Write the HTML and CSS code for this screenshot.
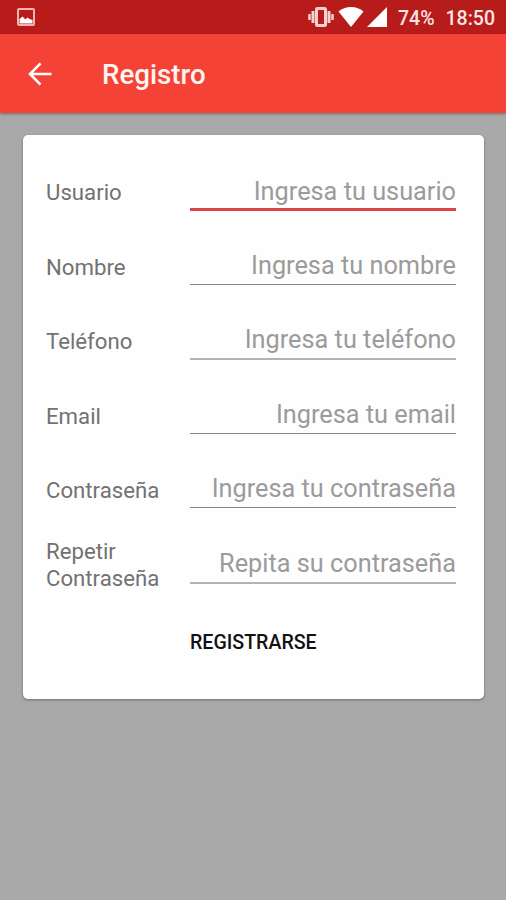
FILE: index.html
```html
<!DOCTYPE html>
<html lang="es">
<head>
    <meta charset="UTF-8">
    <meta name="viewport" content="width=device-width, initial-scale=1.0">
    <title>Registro</title>
    <link rel="stylesheet" href="styles.css">
</head>
<body>
    <div class="status-bar">
        <svg class="icon-picture" width="18" height="18" viewBox="0 0 18 18">
            <rect x="1" y="1" width="16" height="16" rx="1" fill="none" stroke="#f0b5b2" stroke-width="2"/>
            <path d="M2.500 15.500v-4.500l3-2.500 3 3 2-2 2 1.500 3 1v3.500z" fill="#fff"/>
        </svg>
        <div class="status-right">
            <svg class="icon-vibrate" width="26" height="20" viewBox="0 0 26 20" fill="none" stroke="#f8d2ce">
                <rect x="8.500" y="1.500" width="9" height="17" rx="1" stroke-width="3"/>
                <path d="M5 4v12M21 4v12" stroke-width="3"/>
                <path d="M1.500 7v6M24.500 7v6" stroke-width="2.500"/>
            </svg>
            <svg class="icon-wifi" width="26" height="20" viewBox="0 0 26 20">
                <path d="M13 20L0.500 4.500C4 1.500 8 0 13 0s9 1.500 12.500 4.500z" fill="#fff"/>
            </svg>
            <svg class="icon-signal" width="20" height="20" viewBox="0 0 20 20">
                <path d="M0 20L20 0v20z" fill="#fff"/>
            </svg>
            <span class="battery">74%</span>
            <span class="time">18:50</span>
        </div>
    </div>

    <header class="toolbar">
        <a class="back" href="#" aria-label="Volver">
            <svg width="24" height="24" viewBox="0 0 24 24" fill="none" stroke="#fff" stroke-width="2.600">
                <path d="M12.500 1.300L2 12l10.500 10.700M2 12h21.500"/>
            </svg>
        </a>
        <h1>Registro</h1>
    </header>

    <form class="card">
        <div class="form-group">
            <label for="usuario">Usuario</label>
            <input class="active" type="text" id="usuario" placeholder="Ingresa tu usuario">
        </div>
        <div class="form-group">
            <label for="nombre">Nombre</label>
            <input type="text" id="nombre" placeholder="Ingresa tu nombre">
        </div>
        <div class="form-group">
            <label for="telefono">Teléfono</label>
            <input class="light" type="text" id="telefono" placeholder="Ingresa tu teléfono">
        </div>
        <div class="form-group">
            <label for="email">Email</label>
            <input type="text" id="email" placeholder="Ingresa tu email">
        </div>
        <div class="form-group">
            <label for="contrasena">Contraseña</label>
            <input type="password" id="contrasena" placeholder="Ingresa tu contraseña">
        </div>
        <div class="form-group">
            <label for="repetir">Repetir Contraseña</label>
            <input class="light" type="password" id="repetir" placeholder="Repita su contraseña">
        </div>
        <button type="button">REGISTRARSE</button>
    </form>
</body>
</html>
```
FILE: styles.css
```css
* {
    box-sizing: border-box;
}
body {
    margin: 0;
    height: 900px;
    overflow: hidden;
    font-family: Roboto, sans-serif;
    background-color: #a9a9a9;
}
.status-bar {
    display: flex;
    align-items: center;
    justify-content: space-between;
    height: 34px;
    padding: 0 11px 0 17px;
    background-color: #b71c1a;
}
.status-right {
    display: flex;
    align-items: center;
    color: #fbe6e4;
    font-size: 19.500px;
    font-weight: 500;
}
.icon-wifi {
    margin-left: 4px;
}
.icon-signal {
    margin-left: 3px;
}
.battery,
.time {
    margin-left: 11px;
    padding-top: 2px;
}
.toolbar {
    display: flex;
    align-items: center;
    height: 79px;
    padding-left: 28px;
    background-color: #f44336;
    box-shadow: 0 1px 3px rgba(0,0,0,0.35);
}
.back {
    display: flex;
}
h1 {
    margin: 1px 0 0 50px;
    color: #fff4f0;
    font-size: 27.700px;
    font-weight: 500;
}
.card {
    width: 461px;
    height: 564px;
    margin: 22px 0 0 23px;
    padding: 20px 28px 0 23px;
    background-color: #fefefe;
    border-radius: 5px;
    box-shadow: 0 1px 3px rgba(0,0,0,0.35);
}
.form-group {
    display: flex;
    align-items: center;
    height: 74.5px;
}
label {
    width: 144px;
    padding-top: 1px;
    color: #727272;
    font-size: 22.200px;
    line-height: 27px;
}
input {
    width: 266px;
    height: 36px;
    padding: 0 0 2px;
    border: none;
    border-bottom: 1px solid #858585;
    border-radius: 0;
    background: none;
    font-family: inherit;
    font-size: 25.300px;
    text-align: right;
    outline: none;
}
input::placeholder {
    color: #9b9b9b;
    opacity: 1;
}
input.active {
    height: 38px;
    padding: 1px 0 0;
    border-bottom: 3px solid #e04545;
}
input.light {
    height: 38px;
    padding: 1px 0 2px;
    border-bottom: 2px solid #b3b3b3;
}
button {
    display: block;
    margin: 29px 0 0 144px;
    padding: 0;
    border: none;
    background: none;
    color: #111;
    font-family: inherit;
    font-size: 19.600px;
    font-weight: 500;
    line-height: 24px;
}
```
